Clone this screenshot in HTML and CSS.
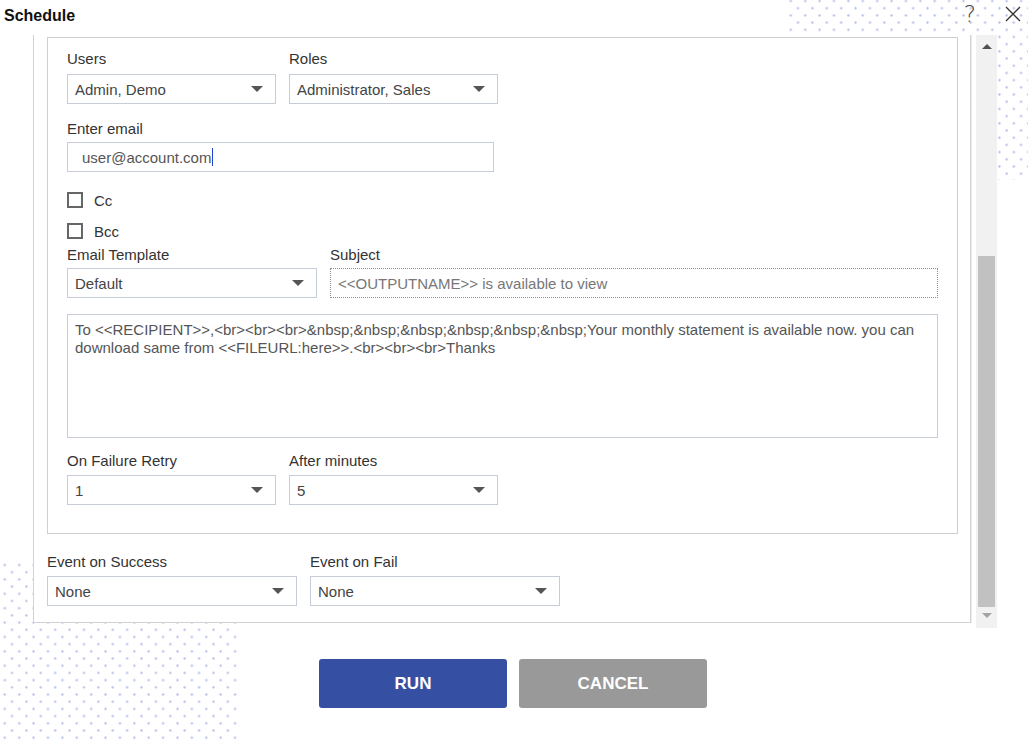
FILE: index.html
```html
<!DOCTYPE html>
<html lang="en">
<head>
<meta charset="utf-8">
<title>Schedule</title>
<link rel="stylesheet" href="styles.css">
</head>
<body>
<div class="deco deco-tr"></div>
<div class="deco deco-bl"></div>

<header class="titlebar">
  <h1 class="title">Schedule</h1>
  <div class="actions">
    <span class="help">?</span>
    <svg class="close" width="16" height="16" viewBox="0 0 16 16" aria-label="Close">
      <path d="M1 1 L15 15 M15 1 L1 15" stroke="#333" stroke-width="1.3" fill="none"/>
    </svg>
  </div>
</header>

<div class="main">
  <div class="panel">
    <div class="group">
      <div class="row users-row">
        <div class="field">
          <div class="label">Users</div>
          <div class="select w209"><span>Admin, Demo</span><i class="caret-down"></i></div>
        </div>
        <div class="field">
          <div class="label">Roles</div>
          <div class="select w209"><span>Administrator, Sales</span><i class="caret-down"></i></div>
        </div>
      </div>

      <div class="field email-field">
        <div class="label">Enter email</div>
        <div class="input email">user@account.com<span class="text-caret"></span></div>
      </div>

      <div class="check cc"><span class="box"></span><span>Cc</span></div>
      <div class="check bcc"><span class="box"></span><span>Bcc</span></div>

      <div class="row template-row">
        <div class="field">
          <div class="label">Email Template</div>
          <div class="select w250"><span>Default</span><i class="caret-down"></i></div>
        </div>
        <div class="field">
          <div class="label">Subject</div>
          <div class="input subject">&lt;&lt;OUTPUTNAME&gt;&gt; is available to view</div>
        </div>
      </div>

      <div class="textarea">To &lt;&lt;RECIPIENT&gt;&gt;,&lt;br&gt;&lt;br&gt;&lt;br&gt;&amp;nbsp;&amp;nbsp;&amp;nbsp;&amp;nbsp;&amp;nbsp;&amp;nbsp;Your monthly statement is available now. you can download same from &lt;&lt;FILEURL:here&gt;&gt;.&lt;br&gt;&lt;br&gt;&lt;br&gt;Thanks</div>

      <div class="row retry-row">
        <div class="field">
          <div class="label">On Failure Retry</div>
          <div class="select w209"><span>1</span><i class="caret-down"></i></div>
        </div>
        <div class="field">
          <div class="label">After minutes</div>
          <div class="select w209"><span>5</span><i class="caret-down"></i></div>
        </div>
      </div>
    </div>

    <div class="row events-row">
      <div class="field">
        <div class="label">Event on Success</div>
        <div class="select w250"><span>None</span><i class="caret-down"></i></div>
      </div>
      <div class="field">
        <div class="label">Event on Fail</div>
        <div class="select w250"><span>None</span><i class="caret-down"></i></div>
      </div>
    </div>
  </div>

  <div class="scrollbar">
    <div class="sb-btn sb-up"><i class="tri-up"></i></div>
    <div class="sb-track"><div class="sb-thumb"></div></div>
    <div class="sb-btn sb-down"><i class="tri-down"></i></div>
  </div>
</div>

<div class="buttons">
  <button class="btn run">RUN</button>
  <button class="btn cancel">CANCEL</button>
</div>
</body>
</html>
```

FILE: styles.css
```css
html {
  background: #fff;
}
body {
  margin: 0;
  padding: 0;
  width: 1028px;
  height: 741px;
  overflow: hidden;
  font-family: "Liberation Sans", Arial, sans-serif;
  color: #333;
  font-size: 15px;
}

/* decorative dot patterns */
.deco {
  position: absolute;
  z-index: -1;
  background-image:
    radial-gradient(circle, #b8c0ea 0.8px, rgba(184,192,234,0) 1.5px),
    radial-gradient(circle, #b8c0ea 0.8px, rgba(184,192,234,0) 1.5px);
  background-size: 14.4px 14.4px, 14.4px 14.4px;
}
.deco-tr {
  top: 0;
  right: 0;
  width: 243px;
  height: 180px;
  background-position: -1.4px -6.2px, 5.8px 1px;
}
.deco-bl {
  left: 0;
  bottom: 0;
  width: 238px;
  height: 178px;
  background-position: -2.4px -5.2px, 4.8px 2px;
}

/* title bar */
.titlebar {
  height: 35px;
  display: flex;
  justify-content: space-between;
  align-items: flex-start;
}
.title {
  margin: 6px 0 0 4px;
  font-size: 16px;
  line-height: 19px;
  font-weight: bold;
  color: #111;
}
.actions {
  display: flex;
  align-items: flex-start;
  margin-right: 7px;
}
.help {
  display: block;
  font-family: "DejaVu Sans", "Liberation Sans", sans-serif;
  font-weight: 200;
  font-size: 23px;
  line-height: normal;
  color: #444;
  margin-top: 1px;
}
.close {
  margin: 6px 0 0 29px;
}

/* main scroll area */
.main {
  display: flex;
  align-items: flex-start;
  margin-left: 33px;
}
.panel {
  width: 938px;
  box-sizing: border-box;
  background: #fff;
  border: 1px solid #d2d2d2;
  border-top: 0;
  box-shadow: 1px 0 0 #ececec;
  padding: 2px 12px 16px 13px;
}
.group {
  border: 1px solid #cfcfcf;
  padding: 12px 19px 28px 19px;
}

.row {
  display: flex;
  gap: 13px;
}
.field {
  display: flex;
  flex-direction: column;
}
.label {
  font-size: 15px;
  line-height: 17px;
  color: #333;
  margin-bottom: 5px;
}
.users-row .label { margin-bottom: 7px; }

.select, .input {
  height: 30px;
  box-sizing: border-box;
  border: 1px solid #c6cdd8;
  display: flex;
  align-items: center;
  font-size: 15px;
  color: #444;
  background: #fff;
}
.select {
  justify-content: space-between;
  padding: 0 12px 0 7px;
}
.w209 { width: 209px; }
.w250 { width: 250px; }
.caret-down {
  width: 0;
  height: 0;
  border-left: 6px solid transparent;
  border-right: 6px solid transparent;
  border-top: 6px solid #555;
}

.email-field { margin-top: 16px; }
.input.email {
  width: 427px;
  padding-left: 14px;
  color: #555;
}
.text-caret {
  display: inline-block;
  width: 1px;
  height: 18px;
  background: #2441c9;
  margin-left: 1px;
}
.input.subject {
  width: 608px;
  border: 1px dotted #8e8e8e;
  padding-left: 7px;
  color: #777;
}

.check {
  display: flex;
  align-items: center;
  height: 16px;
  font-size: 15px;
  color: #333;
}
.check .box {
  width: 16px;
  height: 16px;
  box-sizing: border-box;
  border: 2px solid #666;
  margin-right: 11px;
}
.cc { margin-top: 20px; }
.bcc { margin-top: 15px; }

.template-row { margin-top: 7px; }

.textarea {
  margin-top: 16px;
  width: 871px;
  height: 124px;
  box-sizing: border-box;
  border: 1px solid #c6cdd8;
  padding: 6px 7px;
  font-size: 15px;
  line-height: 18px;
  color: #555;
}

.retry-row { margin-top: 14px; }
.retry-row .label { margin-bottom: 6px; }

.events-row { margin-top: 19px; }
.events-row .label { margin-bottom: 6px; }

/* fake scrollbar */
.scrollbar {
  margin-left: 5px;
  width: 21px;
  height: 593px;
  background: #f1f1f1;
  display: flex;
  flex-direction: column;
}
.sb-btn {
  height: 17px;
  display: flex;
  justify-content: center;
  box-sizing: border-box;
}
.sb-up { padding-top: 9px; }
.sb-down { padding-top: 2px; }
.tri-up {
  width: 0; height: 0;
  border-left: 5px solid transparent;
  border-right: 5px solid transparent;
  border-bottom: 5px solid #505050;
}
.tri-down {
  width: 0; height: 0;
  border-left: 5px solid transparent;
  border-right: 5px solid transparent;
  border-top: 5px solid #a3a3a3;
}
.sb-track {
  flex: 1;
  display: flex;
  flex-direction: column;
  padding: 204px 2px 4px 2px;
}
.sb-thumb {
  flex: 1;
  background: #c1c1c1;
}

/* buttons */
.buttons {
  display: flex;
  justify-content: center;
  gap: 12px;
  margin-top: 31px;
  padding-right: 2px;
}
.btn {
  width: 188px;
  height: 49px;
  border: 0;
  border-radius: 3px;
  color: #fff;
  font-family: "Liberation Sans", Arial, sans-serif;
  font-weight: bold;
  font-size: 17px;
  cursor: pointer;
}
.run { background: #3550a3; }
.cancel { background: #999; }
```
